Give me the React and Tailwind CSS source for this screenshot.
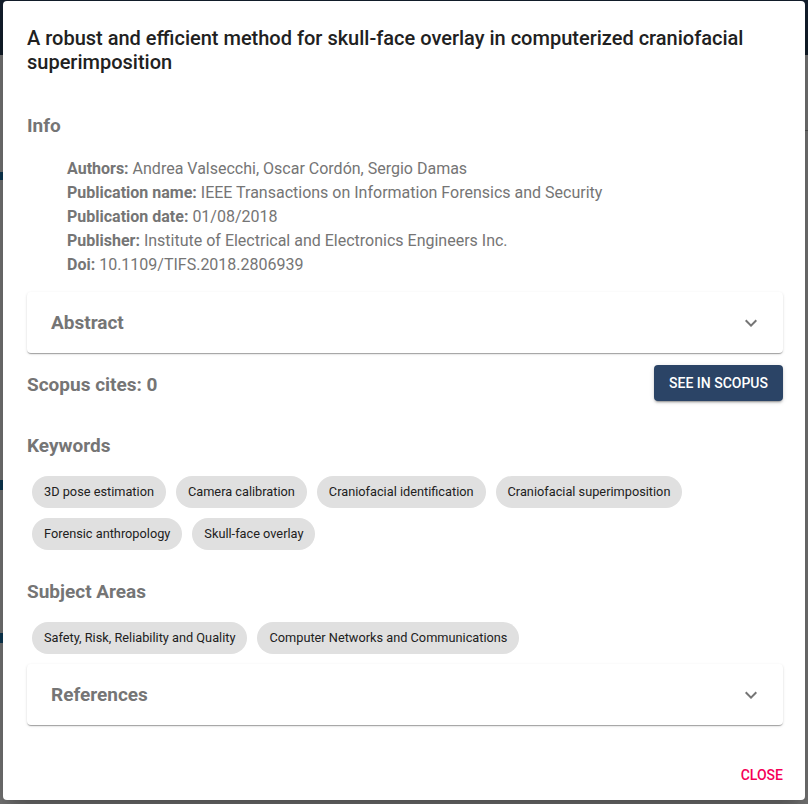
import React from "react";

const Chevron = () => (
  <svg width="24" height="24" viewBox="0 0 24 24" className="block">
    <path d="M7.41 8.59L12 13.17l4.59-4.58L18 10l-6 6-6-6 1.41-1.41z" fill="#757575" />
  </svg>
);

const Chip = ({ children }) => (
  <div className="h-[32px] rounded-full bg-[#e0e0e0] px-[12px] flex items-center text-[12.75px] text-[#212121] leading-none">
    {children}
  </div>
);

const AccordionCard = ({ title }) => (
  <div className="h-[61px] bg-white rounded-[4px] shadow-[0_2px_1px_-1px_rgba(0,0,0,0.2),0_1px_1px_0_rgba(0,0,0,0.14),0_1px_3px_0_rgba(0,0,0,0.12)] flex items-center justify-between pl-[24px] pr-[20px]">
    <span className="text-[19px] font-bold text-[#757575] leading-[24px]">{title}</span>
    <Chevron />
  </div>
);

const InfoLine = ({ label, value }) => (
  <div className="h-[24px] leading-[24px] text-[16px] text-[#757575]">
    <span className="font-bold">{label}</span> {value}
  </div>
);

export default function App() {
  return (
    <div
      className="relative w-[808px] h-[804px] overflow-hidden bg-[#7b7b7b]"
      style={{ fontFamily: "Roboto, 'Noto Sans', sans-serif" }}
    >
      <div className="h-[55px] bg-[#141f2d]" />
      <div className="absolute left-0 top-[172px] w-[3px] h-[8px] bg-[#0d3a55]" />
      <div className="absolute left-0 top-[480px] w-[3px] h-[10px] bg-[#0d3a55]" />
      <div className="absolute left-0 top-[633px] w-[3px] h-[10px] bg-[#0d3a55]" />
      <div className="absolute right-0 top-[130px] w-[3px] h-[1px] bg-[#555]" />

      <div className="absolute left-[3px] top-[1px] w-[802px] h-[799px] bg-white rounded-[4px] shadow-[0_11px_15px_-7px_rgba(0,0,0,0.2),0_24px_38px_3px_rgba(0,0,0,0.14),0_9px_46px_8px_rgba(0,0,0,0.12)] flex flex-col">
        <div className="pl-[24px] pr-[22px] flex flex-col">
          <h2 className="mt-[25px] text-[20px] font-medium leading-[24px] text-[#212121]">
            A robust and efficient method for skull-face overlay in computerized craniofacial superimposition
          </h2>

          <div className="mt-[40px] text-[19px] font-bold leading-[24px] text-[#757575]">Info</div>

          <div className="mt-[19px] pl-[40px] flex flex-col">
            <InfoLine label="Authors:" value="Andrea Valsecchi, Oscar Cordón, Sergio Damas" />
            <InfoLine label="Publication name:" value="IEEE Transactions on Information Forensics and Security" />
            <InfoLine label="Publication date:" value="01/08/2018" />
            <InfoLine label="Publisher:" value="Institute of Electrical and Electronics Engineers Inc." />
            <InfoLine label="Doi:" value="10.1109/TIFS.2018.2806939" />
          </div>

          <div className="mt-[15px]">
            <AccordionCard title="Abstract" />
          </div>

          <div className="mt-[12px] h-[36px] flex items-center justify-between">
            <span className="pt-[4px] text-[19px] font-bold leading-[24px] text-[#757575]">Scopus cites: 0</span>
            <button className="h-[36px] w-[129px] rounded-[4px] bg-[#2b4466] text-white text-[14px] font-medium uppercase shadow-[0_3px_1px_-2px_rgba(0,0,0,0.2),0_2px_2px_0_rgba(0,0,0,0.14),0_1px_5px_0_rgba(0,0,0,0.12)]">
              See in Scopus
            </button>
          </div>

          <div className="mt-[33px] text-[19px] font-bold leading-[24px] text-[#757575]">Keywords</div>

          <div className="mt-[18px] pl-[5px] flex flex-wrap gap-[10px] w-[700px]">
            <Chip>3D pose estimation</Chip>
            <Chip>Camera calibration</Chip>
            <Chip>Craniofacial identification</Chip>
            <Chip>Craniofacial superimposition</Chip>
            <Chip>Forensic anthropology</Chip>
            <Chip>Skull-face overlay</Chip>
          </div>

          <div className="mt-[30px] text-[19px] font-bold leading-[24px] text-[#757575]">Subject Areas</div>

          <div className="mt-[18px] pl-[5px] flex flex-wrap gap-[10px]">
            <Chip>Safety, Risk, Reliability and Quality</Chip>
            <Chip>Computer Networks and Communications</Chip>
          </div>

          <div className="mt-[10px]">
            <AccordionCard title="References" />
          </div>

          <div className="mt-[32px] h-[36px] flex items-center justify-end">
            <button className="text-[14px] font-medium uppercase text-[#f50057] leading-[36px]">
              Close
            </button>
          </div>
        </div>
      </div>
    </div>
  );
}
